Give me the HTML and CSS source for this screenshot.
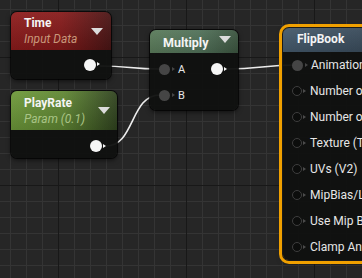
FILE: index.html
```html
<!DOCTYPE html>
<html lang="en">
<head>
    <meta charset="UTF-8">
    <title>Material Graph</title>
    <link rel="stylesheet" href="styles.css">
</head>
<body>

<div class="graph">
    <!-- Cables between pins -->
    <svg class="wires" width="362" height="278" viewBox="0 0 362 278">
        <path d="M100 66 C130 66, 130 69, 160 69" />
        <path d="M106 146 C135 146, 130 95, 160 95" />
        <path d="M226 69 C262 69, 262 65, 297 65" />
    </svg>

    <!-- Time -->
    <div class="node node-time">
        <div class="node-header">
            <div class="node-titles">
                <div class="node-title">Time</div>
                <div class="node-sub">Input Data</div>
            </div>
            <span class="caret"></span>
        </div>
        <div class="node-body out-only">
            <span class="pin pin-out"></span>
        </div>
    </div>

    <!-- PlayRate -->
    <div class="node node-rate">
        <div class="node-header">
            <div class="node-titles">
                <div class="node-title">PlayRate</div>
                <div class="node-sub">Param (0.1)</div>
            </div>
            <span class="caret"></span>
        </div>
        <div class="node-body out-only">
            <span class="pin pin-out"></span>
        </div>
    </div>

    <!-- Multiply -->
    <div class="node node-mul">
        <div class="node-header">
            <div class="node-title">Multiply</div>
            <span class="caret"></span>
        </div>
        <div class="node-body">
            <div class="pin-row">
                <span class="pin pin-linked"></span>
                <span class="pin-label small">A</span>
                <span class="pin pin-out right"></span>
            </div>
            <div class="pin-row">
                <span class="pin pin-linked"></span>
                <span class="pin-label small">B</span>
            </div>
        </div>
    </div>

    <!-- FlipBook (selected) -->
    <div class="node node-flip">
        <div class="node-header">
            <div class="node-title">FlipBook</div>
        </div>
        <div class="node-body">
            <div class="pin-row"><span class="pin pin-linked"></span><span class="pin-label">Animation Phase (S)</span></div>
            <div class="pin-row"><span class="pin"></span><span class="pin-label">Number of Rows (S)</span></div>
            <div class="pin-row"><span class="pin"></span><span class="pin-label">Number of Columns (S)</span></div>
            <div class="pin-row"><span class="pin"></span><span class="pin-label">Texture (T2d)</span></div>
            <div class="pin-row"><span class="pin"></span><span class="pin-label">UVs (V2)</span></div>
            <div class="pin-row"><span class="pin"></span><span class="pin-label">MipBias/Level</span></div>
            <div class="pin-row"><span class="pin"></span><span class="pin-label">Use Mip Bias</span></div>
            <div class="pin-row"><span class="pin"></span><span class="pin-label">Clamp Anim</span></div>
        </div>
    </div>
</div>

</body>
</html>
```

FILE: styles.css
```css
/* Lienzo con rejilla */
body {
    margin: 0;
    padding: 0;
    font-family: Roboto, "Liberation Sans", sans-serif;
    color: #e8e8e8;
    background: #262626;
    overflow: hidden;
}
.graph {
    position: relative;
    width: 362px;
    height: 278px;
    overflow: hidden;
    background-color: #262626;
    background-image:
        linear-gradient(to right, #181818 1px, transparent 1px),
        linear-gradient(to bottom, #181818 1px, transparent 1px),
        linear-gradient(to right, #343434 1px, transparent 1px),
        linear-gradient(to bottom, #343434 1px, transparent 1px);
    background-size: 128px 128px, 128px 128px, 16px 16px, 16px 16px;
    background-position: 58px 57px, 58px 57px, 10px 9px, 10px 9px;
}
.wires {
    position: absolute;
    left: 0;
    top: 0;
}
.wires path {
    fill: none;
    stroke: #ececec;
    stroke-width: 1.6;
}

/* Nodos */
.node {
    position: absolute;
    border-radius: 6px;
    background: rgba(16, 17, 16, 0.96);
    box-shadow: 0 0 0 1px rgba(0, 0, 0, 0.7), 0 2px 5px rgba(0, 0, 0, 0.6);
    overflow: hidden;
}
.node-header {
    display: flex;
    align-items: center;
    justify-content: space-between;
    box-sizing: border-box;
}
.node-title {
    font-size: 12px;
    font-weight: bold;
    line-height: 16px;
    color: #f4f4f4;
}
.node-sub {
    font-size: 12px;
    font-style: italic;
    line-height: 16px;
}
.caret {
    width: 0;
    height: 0;
    border-left: 6px solid transparent;
    border-right: 6px solid transparent;
    border-top: 7px solid #dcdcdc;
}
.node-body {
    display: flex;
    flex-direction: column;
}
.out-only {
    flex-direction: row;
    justify-content: flex-end;
    align-items: center;
}

.node-time {
    left: 11px;
    top: 12px;
    width: 100px;
    height: 67px;
}
.node-time .node-header {
    height: 38px;
    padding: 3px 8px 3px 13px;
    background:
        linear-gradient(180deg, rgba(255, 255, 255, 0.06), rgba(0, 0, 0, 0.15)),
        linear-gradient(90deg, #8e1c1c 0%, #861a1a 50%, #4a1515 100%);
}
.node-time .node-sub {
    color: #c9987a;
}
.node-time .out-only {
    height: 29px;
    padding-right: 11px;
}

.node-rate {
    left: 11px;
    top: 91px;
    width: 106px;
    height: 67px;
}
.node-rate .node-header {
    height: 39px;
    padding: 3px 7px 3px 13px;
    background:
        linear-gradient(180deg, rgba(255, 255, 255, 0.06), rgba(0, 0, 0, 0.15)),
        linear-gradient(90deg, #6e9a3a 0%, #5f8633 50%, #30431f 100%);
}
.node-rate .node-sub {
    color: #a9c486;
}
.node-rate .out-only {
    height: 28px;
    padding-right: 11px;
    padding-top: 2px;
}

.node-mul {
    left: 150px;
    top: 30px;
    width: 88px;
    height: 80px;
}
.node-mul .node-header {
    height: 23px;
    padding: 2px 7px 0 13px;
    background:
        linear-gradient(180deg, rgba(255, 255, 255, 0.05), rgba(0, 0, 0, 0.12)),
        linear-gradient(90deg, #5b7c5b 0%, #52725a 55%, #3c5540 100%);
}
.node-mul .node-title {
    font-size: 12.5px;
}
.node-mul .caret {
    margin-top: -6px;
}
.node-mul .node-body {
    padding-top: 3px;
}

.node-flip {
    left: 283px;
    top: 28px;
    width: 130px;
    height: 232px;
    overflow: visible;
    box-shadow: 0 0 0 1px #1a1a1a, 0 0 0 4px #f0a000, 0 2px 6px rgba(0, 0, 0, 0.6);
}
.node-flip .node-header {
    height: 24px;
    padding: 0 8px 2px 14px;
    border-radius: 6px 6px 0 0;
    background:
        linear-gradient(180deg, rgba(255, 255, 255, 0.05), rgba(0, 0, 0, 0.12)),
        linear-gradient(90deg, #455a6c 0%, #3a4c5c 60%, #2c3946 100%);
}
.node-flip .node-body {
    overflow: hidden;
}

/* Pines */
.pin-row {
    display: flex;
    align-items: center;
    height: 26px;
    padding-left: 9px;
    white-space: nowrap;
}
.pin-label {
    font-size: 12px;
    color: #e6e6e6;
    margin-left: 4px;
}
.pin-label.small {
    font-size: 11px;
    margin-left: 4px;
}
.pin {
    position: relative;
    display: inline-block;
    flex: none;
    width: 10px;
    height: 10px;
    box-sizing: border-box;
    border-radius: 50%;
    background: #0c0d0c;
    border: 1.5px solid #3e3e3e;
    margin-right: 4px;
}
.pin::after {
    content: "";
    position: absolute;
    right: -5px;
    top: 2px;
    border-top: 2.5px solid transparent;
    border-bottom: 2.5px solid transparent;
    border-left: 3px solid #4c4c4c;
}
.pin-linked {
    width: 11px;
    height: 11px;
    border: none;
    background: #454545;
}
.pin-linked::after {
    top: 3px;
    border-left-color: #454545;
}
.pin-out {
    width: 12px;
    height: 12px;
    border: none;
    background: #f6f6f6;
}
.pin-out::after {
    top: 3.5px;
    right: -4px;
    border-left-color: #f6f6f6;
}
.pin-out.right {
    margin-left: auto;
    margin-right: 15px;
}
```
